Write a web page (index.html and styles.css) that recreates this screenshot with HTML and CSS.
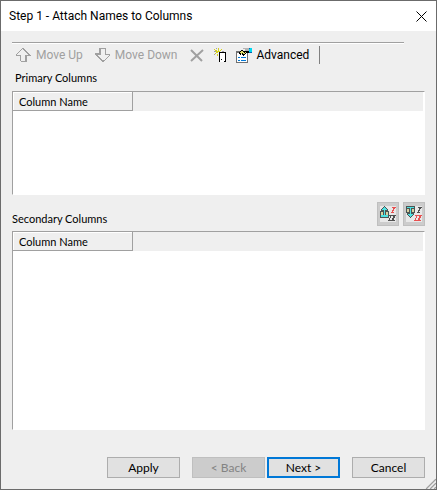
FILE: index.html
```
<!DOCTYPE html>
<html lang="en">
  <head>
    <meta charset="UTF-8" />
    <meta name="viewport" content="width=device-width, initial-scale=1.0" />
    <title>Step 1 - Attach Names to Columns</title>
    <link rel="stylesheet" href="styles.css">
  </head>
  <body>
    <div class="dialog">
      <header class="titlebar">
        <h1>Step 1 - Attach Names to Columns</h1>
        <button class="close" aria-label="Close">
          <svg width="11" height="11" viewBox="0 0 11 11">
            <path d="M.5 .5l10 10M10.5 .5l-10 10" stroke="#000" fill="none" />
          </svg>
        </button>
      </header>

      <main class="content">
        <div class="toolbar">
          <button class="tool move" disabled>
            <svg class="px" width="15" height="14" viewBox="0 0 15 14" fill="#a0a0a0">
              <path d="M6 0h2v1h-2zM5 1h1v1h-1zM4 2h1v1h-1zM3 3h1v1h-1zM2 4h1v1h-1zM1 5h1v1h-1zM0 6h1v1h-1zM0 7h5v1h-5z" />
              <path d="M7 1h2v1h1v1h1v1h1v1h1v1h1v1h1v1h-4v6h-2v-7h3v-1h-1v-1h-1v-1h-1v-1h-1v-1h-1v-1h-1z" />
              <path d="M4 8h1v5h-1zM5 13h4v1h-4z" />
            </svg>
            Move Up
          </button>
          <button class="tool move" disabled>
            <svg class="px" width="15" height="14" viewBox="0 0 15 14" fill="#a0a0a0">
              <path d="M5 0h5v1h-5zM10 0h1v7h-1zM11 6h4v1h-4zM14 7h1v1h-1zM13 8h1v1h-1zM12 9h1v1h-1zM11 10h1v1h-1zM10 11h1v1h-1zM9 12h1v1h-1z" />
              <path d="M4 0h2v7h-3v1h1v1h1v1h1v1h1v1h2v2h-2v-1h-1v-1h-1v-1h-1v-1h-1v-1h-1v-1h-1v-1h-1v-2h4z" />
            </svg>
            Move Down
          </button>
          <button class="tool" disabled aria-label="Delete">
            <svg width="14" height="13" viewBox="0 0 14 13">
              <path d="M1 1l11 11M13 1l-12 11" stroke="#a0a0a0" stroke-width="2" fill="none" />
            </svg>
          </button>
          <button class="tool" aria-label="New">
            <svg class="px" width="12" height="14" viewBox="0 0 12 14">
              <path d="M5 5h7v9h-7z" fill="#fff" />
              <path d="M5 4h7v1h-7zM5 5h1v9h-1zM11 5h1v9h-1zM10 13h1v1h-1zM7 11h1v1h-1z" />
              <path d="M4 0h1v3h-1zM0 1h1v1h-1zM1 2h2v1h-2zM6 2h1v1h-1zM7 1h1v1h-1zM2 3h4v1h-4zM2 4h2v1h-2zM1 5h1v1h-1zM3 6h1v2h-1z" fill="#d6d21c" />
              <path d="M2 0h1v1h-1zM0 3h2v1h-2zM8 3h2v1h-2zM0 6h1v1h-1z" fill="#a0a0a0" />
            </svg>
          </button>
          <button class="tool">
            <svg class="px" width="16" height="15" viewBox="0 0 16 15">
              <path d="M0 3h12v12h-12z" fill="#707070" />
              <path d="M1 5h10v9h-10z" fill="#fff" />
              <path d="M2 9h2v1h-2zM5 9h5v1h-5zM2 12h2v1h-2zM5 12h5v1h-5z" fill="#0078d7" />
              <path d="M3 4h1v-1h1v-1h2v1h2v-1h1v1h3v2h-3v1h-1v1h-1v1h-1v-1h-1v-1h-1v1h-1v-1h-1z" />
              <path d="M5 3h2v1h1v1h1v-1h1v1h-1v1h-2v-1h-1v1h-1v-1h-1v-1h1z" fill="#e4df67" />
              <path d="M7 0h6v1h-6zM9 1h4v2h-4z" fill="#b5b5b5" />
              <path d="M13 0h3v4h-3z" fill="#00d8f0" />
              <path d="M13 0h1v1h-1zM13 4h3v1h-3z" fill="#0063b1" />
            </svg>
            Advanced
          </button>
          <span class="divider"></span>
        </div>

        <h2 class="primary-label" id="primary">Primary Columns</h2>
        <div class="list">
          <table aria-labelledby="primary">
            <thead>
              <tr><th>Column Name</th><td></td></tr>
            </thead>
          </table>
        </div>

        <div class="section-head">
          <h2 id="secondary">Secondary Columns</h2>
          <div class="move-buttons">
            <button aria-label="Move to primary">
              <svg class="px" width="16" height="16" viewBox="0 0 16 16">
                <path fill="#e8e8e8" d="M0 0h16v16h-16z" />
                <path fill="#4c5655" d="M4 0h1v1h1v1h1v1h1v2h1v7h-9v-7h1v-2h1v-1h1v-1h1z" />
                <path fill="#d9d2a0" d="M1 6h2v3h-2zM6 6h2v3h-2z" />
                <path fill="#4fe3e3" d="M4 1h1v1h1v1h1v1h-2v5h3v2h-7v-2h3v-5h-2v-1h1v-1h1z" />
                <path fill="#e85050" d="M12 1h4v1h-1v1h-1v2h-1v1h1v1h-3v-1h1v-2h1v-2h-1z" />
                <path fill="#505050" d="M10 9h6v1h-1v2h-1v2h1v1h-7v-1h1v-2h1v-2h-1v-1zM12 10h-1v2h-1v2h2v-2h1v-2z" fill-rule="evenodd" />
              </svg>
            </button>
            <button aria-label="Move to secondary">
              <svg class="px" width="16" height="16" viewBox="0 0 16 16">
                <path fill="#e8e8e8" d="M0 0h16v16h-16z" />
                <path fill="#4c5655" d="M0 0h9v7h-1v2h-1v1h-1v1h-1v1h-1v-1h-1v-1h-1v-1h-1v-2h-1z" />
                <path fill="#d9d2a0" d="M1 3h2v3h-2zM6 3h2v3h-2z" />
                <path fill="#4fe3e3" d="M1 1h7v1h-3v6h2v1h-1v1h-1v1h-1v-1h-1v-1h-1v-1h2v-6h-3z" />
                <path fill="#505050" d="M12 1h4v1h-1v1h-1v2h-1v1h1v1h-3v-1h1v-2h1v-2h-1z" />
                <path fill="#e85050" d="M10 9h6v1h-1v2h-1v2h1v1h-7v-1h1v-2h1v-2h-1v-1zM12 10h-1v2h-1v2h2v-2h1v-2z" fill-rule="evenodd" />
              </svg>
            </button>
          </div>
        </div>
        <div class="list list-fill">
          <table aria-labelledby="secondary">
            <thead>
              <tr><th>Column Name</th><td></td></tr>
            </thead>
          </table>
        </div>

        <footer class="actions">
          <button>Apply</button>
          <div class="steps">
            <button disabled>&lt; Back</button>
            <button class="next">Next &gt;</button>
          </div>
          <button>Cancel</button>
        </footer>
      </main>

      <svg class="grip" width="12" height="12" viewBox="0 0 12 12">
        <path d="M1 12l11-11M5 12l7-7M9 12l3-3" stroke="#fff" fill="none" />
        <path d="M2 12l10-10M6 12l6-6M10 12l2-2" stroke="#a0a0a0" stroke-width="1.4" fill="none" />
      </svg>
    </div>
  </body>
</html>
```
FILE: styles.css
```
* {
  box-sizing: border-box;
}

body {
  margin: 0;
  font-family: Lato, "Liberation Sans", sans-serif;
  font-size: 11px;
  color: #000;
}

h1,
h2 {
  margin: 0;
  font-size: 11px;
  font-weight: normal;
  line-height: 14px;
}

button {
  font-family: inherit;
  font-size: 12px;
  color: #000;
  padding: 0;
}

svg {
  display: block;
}

.px {
  shape-rendering: crispEdges;
}

.dialog {
  position: relative;
  display: flex;
  flex-direction: column;
  min-height: 100vh;
  border: 1px solid #6b6b6b;
  background-color: #efefef;
}

.titlebar {
  display: flex;
  justify-content: space-between;
  align-items: center;
  height: 30px;
  padding: 0 9px 0 8px;
  background-color: #fff;
}

.titlebar h1 {
  font-family: Roboto, sans-serif;
  font-size: 12px;
}

.close {
  border: none;
  background: none;
}

.content {
  flex: 1;
  display: flex;
  flex-direction: column;
  padding: 11px;
}

/* toolbar */
.toolbar {
  display: flex;
  align-items: center;
  gap: 10px;
  height: 25px;
  margin-right: 21px;
  padding-left: 4px;
  border-top: 1px solid #a0a0a0;
  box-shadow: inset 0 1px #fff;
}

.tool {
  display: flex;
  align-items: center;
  gap: 5px;
  border: none;
  background: none;
  font-family: Roboto, sans-serif;
}

.tool:disabled {
  color: #a0a0a0;
}

.move {
  margin-right: 2px;
}

.divider {
  width: 1px;
  height: 18px;
  background-color: #808080;
}

.primary-label {
  margin: 4px 0 6px;
  padding-left: 3px;
}

/* lists */
.list {
  height: 104px;
  border: 1px solid #fff;
  border-top-color: #a0a0a0;
  border-left-color: #a0a0a0;
  background-color: #fff;
}

.list-fill {
  flex: 1;
}

.list table {
  width: 100%;
  border-collapse: separate;
  border-spacing: 0;
  border-right: 1px solid #fff;
}

.list th,
.list td {
  height: 19px;
  padding: 0;
  background-color: #efefef;
}

.list th {
  width: 120px;
  padding-left: 6px;
  border-right: 1px solid #a0a0a0;
  border-bottom: 1px solid #a0a0a0;
  box-shadow: inset 1px 1px #fff;
  font-size: 11px;
  font-weight: normal;
  text-align: left;
}

.section-head {
  display: flex;
  justify-content: space-between;
  align-items: flex-end;
  height: 36px;
  padding-bottom: 5px;
}

.move-buttons {
  display: flex;
  gap: 4px;
}

.move-buttons button {
  display: flex;
  align-items: center;
  justify-content: center;
  width: 22px;
  height: 24px;
  border: 1px solid #bfbfbf;
  background-color: #ccc;
}

/* bottom buttons */
.actions {
  display: flex;
  justify-content: flex-end;
  gap: 12px;
  margin-top: 27px;
}

.steps {
  display: flex;
  gap: 2px;
}

.actions button {
  width: 73px;
  height: 21px;
  border: 1px solid #adadad;
  background-color: #e1e1e1;
}

.actions button:disabled {
  border-color: #bfbfbf;
  background-color: #ccc;
  color: #838383;
}

.actions .next {
  border: 2px solid #0078d7;
}

/* resize grip in the window corner */
.grip {
  position: absolute;
  right: 0;
  bottom: 0;
}
```
